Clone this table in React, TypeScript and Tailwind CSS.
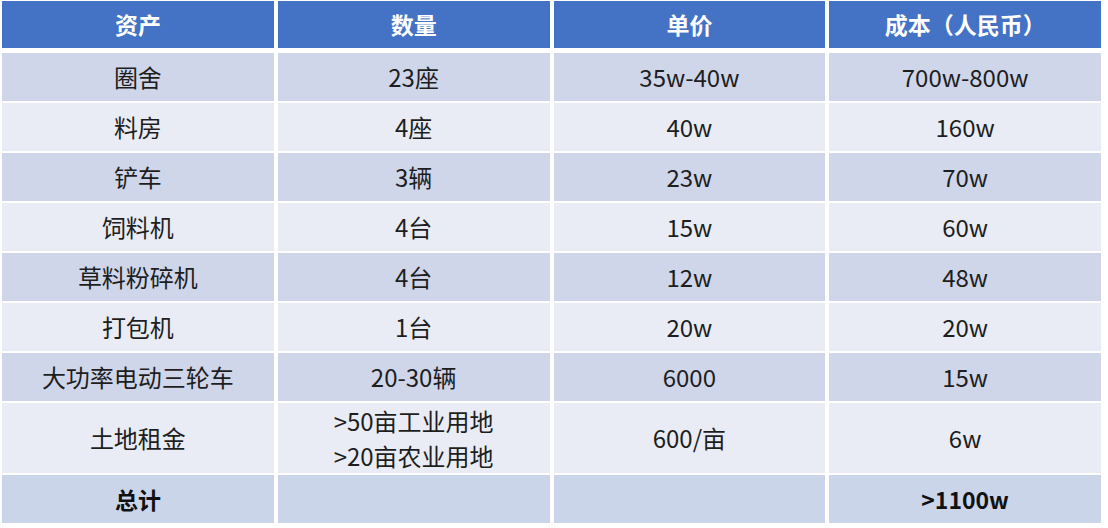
import React from "react";

const rows: { a: string; b: React.ReactNode; c: string; d: string; tall?: boolean }[] = [
  { a: "圈舍", b: "23座", c: "35w-40w", d: "700w-800w" },
  { a: "料房", b: "4座", c: "40w", d: "160w" },
  { a: "铲车", b: "3辆", c: "23w", d: "70w" },
  { a: "饲料机", b: "4台", c: "15w", d: "60w" },
  { a: "草料粉碎机", b: "4台", c: "12w", d: "48w" },
  { a: "打包机", b: "1台", c: "20w", d: "20w" },
  { a: "大功率电动三轮车", b: "20-30辆", c: "6000", d: "15w" },
  {
    a: "土地租金",
    b: (
      <div className="flex flex-col items-center leading-[35px]">
        <div>&gt;50亩工业用地</div>
        <div>&gt;20亩农业用地</div>
      </div>
    ),
    c: "600/亩",
    d: "6w",
    tall: true,
  },
];

const font = { fontFamily: '"Noto Sans CJK SC", "Noto Sans", sans-serif' };

export default function App() {
  return (
    <div className="w-[1108px] h-[528px] bg-white pt-[1px] pl-[2px]" style={font}>
      <div className="w-[1099px] flex flex-col">
        <div className="grid grid-cols-4 gap-x-[4px] h-[47px] mb-[5px]">
          {["资产", "数量", "单价", "成本（人民币）"].map((h) => (
            <div key={h} className="bg-[#4472c4] text-white font-bold text-[23px] flex items-center justify-center">
              {h}
            </div>
          ))}
        </div>
        {rows.map((r, i) => (
          <div
            key={i}
            className={`grid grid-cols-4 gap-x-[4px] mb-[2px] ${r.tall ? "h-[70px]" : "h-[48px]"}`}
          >
            {[r.a, r.b, r.c, r.d].map((v, j) => (
              <div
                key={j}
                className={`${i % 2 === 0 ? "bg-[#cfd6ea]" : "bg-[#e9ecf5]"} text-[#1e1e1e] text-[24px] flex items-center justify-center`}
              >
                {v}
              </div>
            ))}
          </div>
        ))}
        <div className="grid grid-cols-4 gap-x-[4px] h-[48px]">
          <div className="bg-[#cbd5ea] text-[#111] font-bold text-[23px] flex items-center justify-center">总计</div>
          <div className="bg-[#cbd5ea]"></div>
          <div className="bg-[#cbd5ea]"></div>
          <div className="bg-[#cbd5ea] text-[#111] font-bold text-[23px] flex items-center justify-center">&gt;1100w</div>
        </div>
      </div>
    </div>
  );
}
